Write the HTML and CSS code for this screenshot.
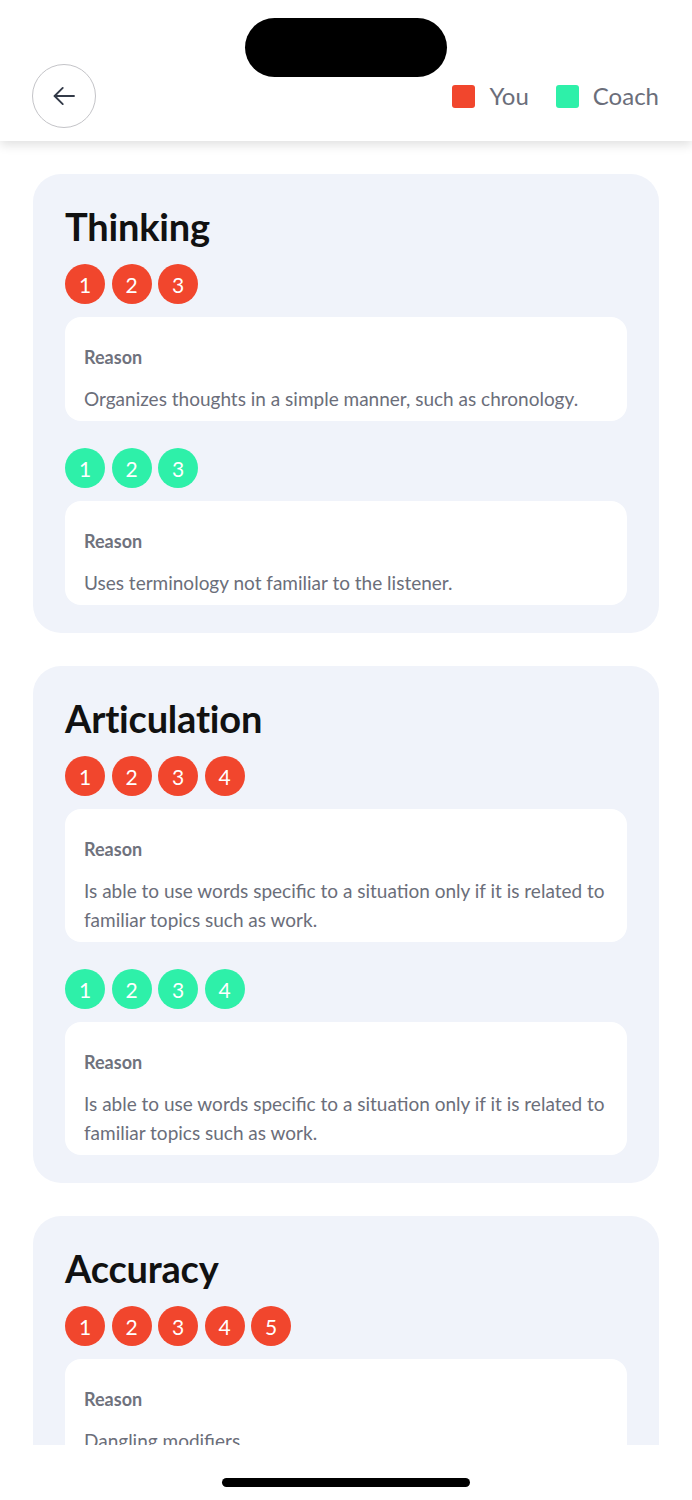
FILE: index.html
```html
<!DOCTYPE html>
<html lang="en">
<head>
<meta charset="utf-8">
<title>Feedback</title>
<link rel="stylesheet" href="styles.css">
</head>
<body>
<header class="topbar">
  <div class="island"></div>
  <button class="back" aria-label="Back">
    <svg width="30" height="30" viewBox="0 0 24 24" fill="none" stroke="#333a48" stroke-width="1.5" stroke-linecap="round" stroke-linejoin="round"><path d="M20 12H4.5"/><path d="M11 5.5L4.5 12L11 18.5"/></svg>
  </button>
  <div class="legend">
    <span class="key"><i class="sw you"></i>You</span>
    <span class="key"><i class="sw coach"></i>Coach</span>
  </div>
</header>

<main class="list">
  <section class="card">
    <h2 class="title">Thinking</h2>
    <div class="dots red"><span>1</span><span>2</span><span>3</span></div>
    <div class="reason"><div class="label">Reason</div><p class="text">Organizes thoughts in a simple manner, such as chronology.</p></div>
    <div class="dots green"><span>1</span><span>2</span><span>3</span></div>
    <div class="reason"><div class="label">Reason</div><p class="text">Uses terminology not familiar to the listener.</p></div>
  </section>

  <section class="card">
    <h2 class="title">Articulation</h2>
    <div class="dots red"><span>1</span><span>2</span><span>3</span><span>4</span></div>
    <div class="reason"><div class="label">Reason</div><p class="text">Is able to use words specific to a situation only if it is related to familiar topics such as work.</p></div>
    <div class="dots green"><span>1</span><span>2</span><span>3</span><span>4</span></div>
    <div class="reason"><div class="label">Reason</div><p class="text">Is able to use words specific to a situation only if it is related to familiar topics such as work.</p></div>
  </section>

  <section class="card">
    <h2 class="title">Accuracy</h2>
    <div class="dots red"><span>1</span><span>2</span><span>3</span><span>4</span><span>5</span></div>
    <div class="reason"><div class="label">Reason</div><p class="text">Dangling modifiers</p></div>
  </section>
</main>

<div class="homebar"><div class="indicator"></div></div>
</body>
</html>
```

FILE: styles.css
```css
* { box-sizing: border-box; }
html, body { margin: 0; padding: 0; background: #fff; }
body {
  font-family: Lato, "Noto Sans", sans-serif;
  color: #111;
  height: 1500px;
  overflow: hidden;
}

.topbar {
  position: relative;
  height: 141px;
  background: #fff;
  box-shadow: 0 4px 10px rgba(0,0,0,0.12);
  display: flex;
  align-items: flex-start;
  justify-content: space-between;
  padding: 64px 33px 0 32px;
  z-index: 2;
}
.island {
  position: absolute;
  left: 245px;
  top: 18px;
  width: 202px;
  height: 59px;
  border-radius: 30px;
  background: #000;
}
.back {
  width: 64px;
  height: 64px;
  border-radius: 50%;
  border: 1px solid #c4c4c8;
  background: #fff;
  display: flex;
  align-items: center;
  justify-content: center;
  padding: 0;
}
.legend {
  display: flex;
  align-items: center;
  gap: 27px;
  height: 64px;
}
.key {
  display: flex;
  align-items: center;
  gap: 14px;
  font-size: 24px;
  color: #6b6e7a;
  line-height: 32px;
}
.sw {
  display: block;
  width: 23px;
  height: 23px;
  border-radius: 3px;
}
.sw.you { background: #f1462d; }
.sw.coach { background: #2ef0a9; }

.list {
  padding: 33px 33px 0 33px;
  display: flex;
  flex-direction: column;
  gap: 33px;
}
.card {
  background: #f0f3fa;
  border-radius: 28px;
  padding: 26px 32px 28px 32px;
}
.title {
  margin: 0;
  font-size: 38px;
  line-height: 52px;
  font-weight: 700;
  color: #111;
  letter-spacing: -0.2px;
}
.dots {
  display: flex;
  gap: 6.5px;
  margin-top: 12px;
}
.reason + .dots { margin-top: 27px; }
.dots span {
  width: 40px;
  height: 40px;
  border-radius: 50%;
  display: flex;
  align-items: center;
  justify-content: center;
  color: #fff;
  font-size: 21px;
}
.dots.red span { background: #f1462d; }
.dots.green span { background: #2ef0a9; }

.reason {
  margin-top: 13px;
  background: #fff;
  border-radius: 16px;
  padding: 28px 20px 8px 19px;
}
.label {
  font-size: 18px;
  line-height: 24px;
  font-weight: 700;
  color: #6f727d;
}
.text {
  margin: 15px 0 0 0;
  font-size: 19px;
  line-height: 29px;
  color: #6b6e7a;
}

.homebar {
  position: fixed;
  left: 0;
  right: 0;
  bottom: 0;
  height: 55px;
  background: #fff;
  display: flex;
  justify-content: center;
  z-index: 3;
}
.indicator {
  margin-top: 33px;
  width: 248px;
  height: 9px;
  border-radius: 5px;
  background: #000;
}
```
